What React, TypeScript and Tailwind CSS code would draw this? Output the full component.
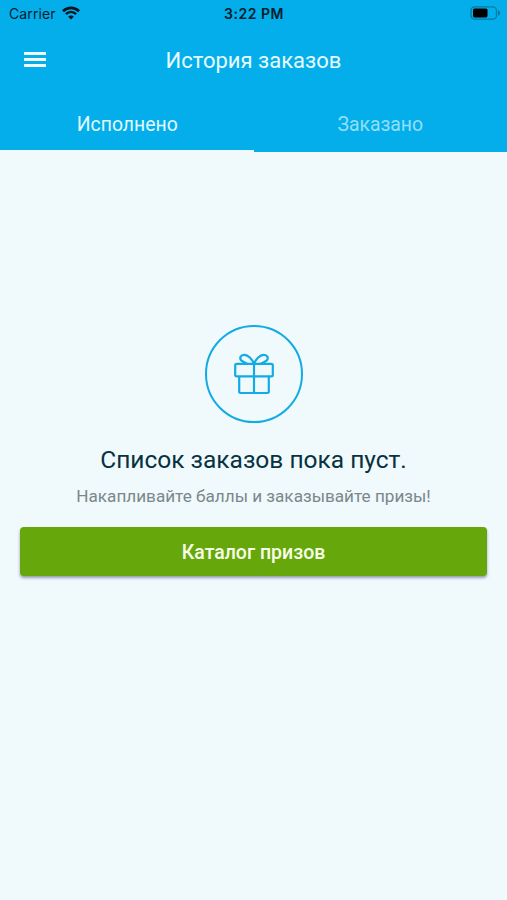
function StatusBar() {
  return (
    <div className="flex h-7 items-center justify-between pl-[9px] pr-[6px] font-['Inter',sans-serif] text-[#03202c]">
      <div className="flex flex-1 items-center gap-[6px]">
        <span className="text-[14px] leading-7 tracking-[0.1px]">Carrier</span>
        <svg width="18" height="14" viewBox="0 0 18 14" className="-mt-[2px]" fill="none" stroke="#03161e">
          <path d="M1 5.2C5.6.8 12.4.8 17 5.2" strokeWidth="2.7" />
          <path d="M3.9 8.2c3-2.9 7.2-2.9 10.2 0" strokeWidth="2.4" />
          <path d="M9 13.6 6.2 10.7c1.6-1.6 4-1.6 5.6 0Z" fill="#03161e" stroke="none" />
        </svg>
      </div>
      <span className="-ml-[2px] text-[14px] font-semibold leading-7 tracking-[0.5px]">3:22 PM</span>
      <div className="flex flex-1 justify-end">
        <svg width="31" height="14" viewBox="0 0 31 14" className="-mt-[2px]">
          <rect x="1" y="0.8" width="25.5" height="12.4" rx="3.8" fill="none" stroke="#0678a0" strokeWidth="1.3" />
          <rect x="3" y="2.6" width="14.5" height="8.8" rx="1.6" fill="#000" />
          <path d="M28 4.3c2.8.9 2.8 4.5 0 5.4Z" fill="#0678a0" />
        </svg>
      </div>
    </div>
  );
}

function GiftIcon() {
  return (
    <svg width="42" height="42" viewBox="0 0 42 42" fill="none" stroke="#12abe3" strokeWidth="2.2" strokeLinejoin="round">
      <rect x="2.2" y="10.8" width="37.6" height="12.6" rx="1.4" />
      <path d="M6.2 23.4v15.2q0 1.4 1.4 1.4h26.8q1.4 0 1.4-1.4V23.4M21 10.8V40" />
      <path d="M21 10.8C19 6 15 2 11.500 1.800 7.500 1.600 6 5.500 8.500 7.600 10.500 9.400 12.500 10 14.500 10.800" />
      <path d="M21 10.8C23 6 27 2 30.500 1.800 34.500 1.600 36 5.500 33.500 7.600 31.500 9.400 29.500 10 27.500 10.800" />
    </svg>
  );
}

export default function App() {
  return (
    <div className="flex h-[900px] w-[507px] flex-col bg-[#f0f9fc] font-['Roboto',sans-serif]">
      <header className="flex h-[152px] flex-col bg-[#03aeeb]">
        <StatusBar />
        <div className="grid h-[66px] grid-cols-[80px_1fr_80px] items-center">
          <button aria-label="Меню" className="-mt-[3px] flex w-[46px] flex-col gap-[3px] pl-6">
            <span className="h-[3px] bg-[#f0fbff]" />
            <span className="h-[3px] bg-[#f0fbff]" />
            <span className="h-[3px] bg-[#f0fbff]" />
          </button>
          <h1 className="text-center text-[22px] leading-7 text-[#e8fbff]">История заказов</h1>
        </div>
        <nav className="grid h-[58px] grid-cols-2 text-center text-[19.4px]">
          <button className="border-b-2 border-[#f0f9fc] pt-[6px] pl-px text-[#e0faff]">Исполнено</button>
          <button className="border-b-2 border-transparent pt-[6px] text-[#93dff8]">Заказано</button>
        </nav>
      </header>

      <main className="flex flex-col items-center px-5 pt-[173px]">
        <div className="flex size-[98px] items-center justify-center rounded-full border-2 border-[#12abe3]">
          <GiftIcon />
        </div>
        <h2 className="mt-[21px] text-[24.5px] leading-8 text-[#073241]">Список заказов пока пуст.</h2>
        <p className="mt-2 text-[17.15px] leading-6 text-[#7a888b]">Накапливайте баллы и заказывайте призы!</p>
        <button className="mt-[19px] h-[49px] w-full rounded-[4px] bg-[#66a80b] pt-[3px] text-[19.5px] font-medium text-[#f7ffe9] shadow-[0_2px_3px_rgba(40,40,80,0.45)]">
          Каталог призов
        </button>
      </main>
    </div>
  );
}
